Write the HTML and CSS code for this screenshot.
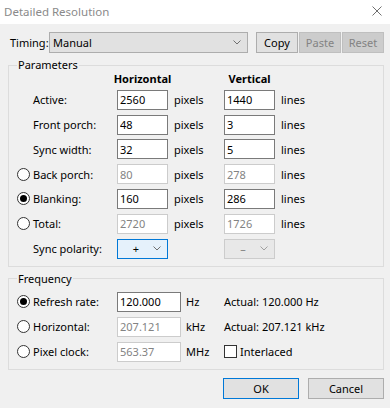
FILE: index.html
```html
<!DOCTYPE html>
<html lang="en">
<head>
  <meta charset="UTF-8">
  <title>Detailed Resolution</title>
  <link rel="stylesheet" href="styles.css">
</head>
<body>
  <div class="titlebar">
    <span class="title">Detailed Resolution</span>
    <svg class="close" width="10" height="10" viewBox="0 0 10 10"><path d="M0.5 0.5 L9.5 9.5 M9.5 0.5 L0.5 9.5" stroke="#707070" stroke-width="1" fill="none"/></svg>
  </div>

  <div class="dialog">
    <div class="timing">
      <span class="timing-label">Timing:</span>
      <div class="combo combo-wide">
        <span>Manual</span>
        <svg width="8" height="5" viewBox="0 0 8 5"><polyline points="0.5,0.5 4,4 7.5,0.5" stroke="#707070" fill="none"/></svg>
      </div>
      <div class="btn-group">
        <button class="btn small">Copy</button>
        <button class="btn small" disabled>Paste</button>
        <button class="btn small" disabled>Reset</button>
      </div>
    </div>

    <fieldset class="group">
      <legend>Parameters</legend>
      <div class="params">
        <span></span><span></span>
        <span class="head">Horizontal</span><span></span>
        <span class="head">Vertical</span><span></span>

        <span></span><span class="lbl">Active:</span>
        <input class="field" value="2560"><span class="unit">pixels</span>
        <input class="field" value="1440"><span class="unit">lines</span>

        <span></span><span class="lbl">Front porch:</span>
        <input class="field" value="48"><span class="unit">pixels</span>
        <input class="field" value="3"><span class="unit">lines</span>

        <span></span><span class="lbl">Sync width:</span>
        <input class="field" value="32"><span class="unit">pixels</span>
        <input class="field" value="5"><span class="unit">lines</span>

        <span class="radio"></span><span class="lbl">Back porch:</span>
        <input class="field" value="80" disabled><span class="unit">pixels</span>
        <input class="field" value="278" disabled><span class="unit">lines</span>

        <span class="radio checked"></span><span class="lbl">Blanking:</span>
        <input class="field" value="160"><span class="unit">pixels</span>
        <input class="field" value="286"><span class="unit">lines</span>

        <span class="radio"></span><span class="lbl">Total:</span>
        <input class="field" value="2720" disabled><span class="unit">pixels</span>
        <input class="field" value="1726" disabled><span class="unit">lines</span>

        <span></span><span class="lbl">Sync polarity:</span>
        <div class="combo combo-focus">
          <span class="combo-val">+</span>
          <svg width="8" height="5" viewBox="0 0 8 5"><polyline points="0.5,0.5 4,4 7.5,0.5" stroke="#707070" fill="none"/></svg>
        </div>
        <span></span>
        <div class="combo combo-off">
          <span class="combo-val">–</span>
          <svg width="8" height="5" viewBox="0 0 8 5"><polyline points="0.5,0.5 4,4 7.5,0.5" stroke="#a0a0a0" fill="none"/></svg>
        </div>
        <span></span>
      </div>
    </fieldset>

    <fieldset class="group">
      <legend>Frequency</legend>
      <div class="freq">
        <span class="radio checked"></span><span class="lbl">Refresh rate:</span>
        <input class="field" value="120.000"><span class="unit">Hz</span>
        <span class="lbl">Actual: 120.000 Hz</span>

        <span class="radio"></span><span class="lbl">Horizontal:</span>
        <input class="field" value="207.121" disabled><span class="unit">kHz</span>
        <span class="lbl">Actual: 207.121 kHz</span>

        <span class="radio"></span><span class="lbl">Pixel clock:</span>
        <input class="field" value="563.37" disabled><span class="unit">MHz</span>
        <label class="check"><span class="box"></span>Interlaced</label>
      </div>
    </fieldset>

    <div class="actions">
      <button class="btn wide default">OK</button>
      <button class="btn wide">Cancel</button>
    </div>
  </div>
</body>
</html>
```

FILE: styles.css
```css
body {
  margin: 0;
  width: 390px;
  height: 408px;
  background-color: #f0f0f0;
  font-family: 'Segoe UI', 'Noto Sans', sans-serif;
  font-size: 11px;
  color: #000;
  overflow: hidden;
}

.titlebar {
  height: 24px;
  background-color: #fff;
  display: flex;
  align-items: center;
  justify-content: space-between;
  padding: 0 8px 2px 4px;
  box-sizing: border-box;
}

.title {
  color: #8a8a8a;
  font-size: 11.5px;
}

.dialog {
  padding: 0 6px 0 8px;
}

.timing {
  display: flex;
  align-items: center;
  margin-top: 8px;
  height: 21px;
}

.timing-label {
  flex: none;
  width: 41px;
  padding-left: 2px;
  box-sizing: border-box;
  white-space: nowrap;
}

.combo {
  display: flex;
  align-items: center;
  justify-content: space-between;
  box-sizing: border-box;
  height: 20px;
  border: 1px solid #adadad;
  background-color: #e1e1e1;
  padding: 0 6px 0 3px;
}

.combo-wide {
  flex: none;
  width: 199px;
  height: 21px;
}

.combo-focus {
  border-color: #0078d7;
  background-color: #e5f1fb;
}

.combo-off {
  border-color: #cccccc;
  background-color: #e8e8e8;
  color: #838383;
}

.combo-val {
  width: 30px;
  text-align: center;
}

.btn-group {
  display: flex;
  gap: 1px;
  margin-left: 8px;
}

.btn {
  font-family: inherit;
  font-size: 11px;
  background-color: #e1e1e1;
  border: 1px solid #adadad;
  padding: 0;
  color: #000;
}

.btn.small {
  width: 42px;
  height: 21px;
}

.btn:disabled {
  background-color: #cccccc;
  border-color: #bfbfbf;
  color: #838383;
}

.group {
  border: 1px solid #dcdcdc;
  margin: 5px 0 0 0;
  padding: 0 8px 7px 8px;
}

.group legend {
  padding: 0 1px;
  line-height: 14px;
}

.params {
  display: grid;
  grid-template-columns: 16px 84px 51px 56px 51px auto;
  grid-template-rows: 13px;
  grid-auto-rows: 20px;
  row-gap: 4.8px;
  align-items: center;
}

.freq {
  display: grid;
  grid-template-columns: 16px 84px 64px 43px auto;
  grid-auto-rows: 20px;
  row-gap: 5px;
  align-items: center;
  padding-top: 6px;
}

.head {
  font-weight: bold;
  text-align: center;
  margin: 0 -12px;
  line-height: 13px;
}

.unit {
  padding-left: 6px;
}

.freq .unit {
  padding-left: 5px;
}

.field {
  box-sizing: border-box;
  width: 100%;
  height: 20px;
  border: 1px solid #7a7a7a;
  background-color: #fff;
  font-family: inherit;
  font-size: 11px;
  padding: 0 2px;
  margin: 0;
  color: #000;
  outline: none;
}

.field:disabled {
  border-color: #cccccc;
  color: #838383;
}

.radio {
  width: 13px;
  height: 13px;
  border: 1px solid #333;
  border-radius: 50%;
  background-color: #fff;
  box-sizing: border-box;
  display: flex;
  align-items: center;
  justify-content: center;
}

.radio.checked::after {
  content: "";
  width: 7px;
  height: 7px;
  border-radius: 50%;
  background-color: #000;
}

.check {
  display: flex;
  align-items: center;
  gap: 3px;
}

.check .box {
  width: 13px;
  height: 13px;
  border: 1px solid #333;
  background-color: #fff;
  box-sizing: border-box;
}

.actions {
  display: flex;
  justify-content: flex-end;
  gap: 9px;
  margin-top: 8px;
}

.btn.wide {
  width: 76px;
  height: 21px;
}

.btn.default {
  border-color: #0078d7;
}
```
